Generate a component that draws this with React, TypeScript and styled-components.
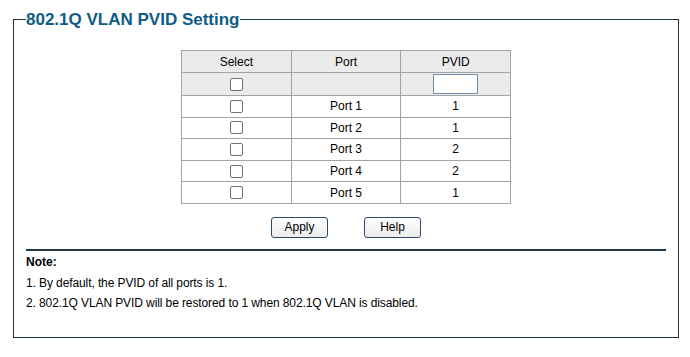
import React, { useState } from 'react';
import styled, { createGlobalStyle } from 'styled-components';

const GlobalStyle = createGlobalStyle`
  html, body {
    margin: 0;
    padding: 0;
    background: #ffffff;
  }
  body {
    font-family: 'Liberation Sans', Arial, sans-serif;
    font-size: 12px;
    color: #000000;
  }
`;

const Panel = styled.fieldset`
  box-sizing: border-box;
  width: 666px;
  height: 328px;
  margin: 10px 0 0 13px;
  padding: 0 12px 0 12px;
  border: 1px solid #1e3342;
  min-width: 0;
`;

const Title = styled.legend`
  padding: 0;
  font-size: 17px;
  font-weight: bold;
  color: #0f5c85;
  line-height: 19px;
`;

const TableWrap = styled.div`
  display: flex;
  justify-content: center;
  padding-top: 21px;
`;

const PortTable = styled.table`
  border-collapse: collapse;
  width: 330px;
  table-layout: fixed;
`;

const HeadCell = styled.th`
  height: 21px;
  padding: 0;
  background: #ebebeb;
  border: 1px solid #a3a3a3;
  font-weight: normal;
  text-align: center;
  vertical-align: middle;
`;

const Cell = styled.td<{ $shaded?: boolean }>`
  height: ${({ $shaded }) => ($shaded ? '22px' : '20.6px')};
  padding: 0;
  background: ${({ $shaded }) => ($shaded ? '#ebebeb' : '#ffffff')};
  border: 1px solid #a3a3a3;
  text-align: center;
  vertical-align: middle;
`;

const Check = styled.input.attrs({ type: 'checkbox' })`
  appearance: none;
  box-sizing: border-box;
  display: block;
  width: 13px;
  height: 13px;
  margin: 0 auto;
  border: 1px solid #707070;
  border-radius: 2px;
  background: #ffffff;
`;

const PvidInput = styled.input`
  box-sizing: border-box;
  display: block;
  width: 45px;
  height: 20px;
  margin: 0 auto;
  border: 1px solid #6e8fae;
  background: #ffffff;
  font: inherit;
`;

const Actions = styled.div`
  display: flex;
  justify-content: center;
  gap: 36px;
  padding-top: 13px;
`;

const Button = styled.button`
  box-sizing: border-box;
  width: 57px;
  height: 21px;
  padding: 0;
  border: 1px solid #2f4a68;
  border-radius: 3px;
  background: linear-gradient(#ffffff, #ececec);
  font-family: 'Liberation Sans', Arial, sans-serif;
  font-size: 12px;
  color: #000000;
`;

const Divider = styled.hr`
  margin: 11px 0 0 0;
  border: 0;
  height: 2px;
  background: #1e3a4c;
`;

const Notes = styled.div`
  padding-top: 1px;
  line-height: 20px;
  letter-spacing: -0.1px;
`;

const NoteTitle = styled.div`
  margin-bottom: 1px;
  font-weight: bold;
  letter-spacing: 0;
`;

const ports = [
  { name: 'Port 1', pvid: 1 },
  { name: 'Port 2', pvid: 1 },
  { name: 'Port 3', pvid: 2 },
  { name: 'Port 4', pvid: 2 },
  { name: 'Port 5', pvid: 1 },
];

export default function App() {
  const [pvid, setPvid] = useState('');

  return (
    <>
      <GlobalStyle />
      <Panel>
        <Title>802.1Q VLAN PVID Setting</Title>
        <TableWrap>
          <PortTable>
            <thead>
              <tr>
                <HeadCell>Select</HeadCell>
                <HeadCell>Port</HeadCell>
                <HeadCell>PVID</HeadCell>
              </tr>
            </thead>
            <tbody>
              <tr>
                <Cell $shaded>
                  <Check />
                </Cell>
                <Cell $shaded />
                <Cell $shaded>
                  <PvidInput value={pvid} onChange={(e) => setPvid(e.target.value)} />
                </Cell>
              </tr>
              {ports.map((p) => (
                <tr key={p.name}>
                  <Cell>
                    <Check />
                  </Cell>
                  <Cell>{p.name}</Cell>
                  <Cell>{p.pvid}</Cell>
                </tr>
              ))}
            </tbody>
          </PortTable>
        </TableWrap>
        <Actions>
          <Button type='button'>Apply</Button>
          <Button type='button'>Help</Button>
        </Actions>
        <Divider />
        <Notes>
          <NoteTitle>Note:</NoteTitle>
          <div>1. By default, the PVID of all ports is 1.</div>
          <div>2. 802.1Q VLAN PVID will be restored to 1 when 802.1Q VLAN is disabled.</div>
        </Notes>
      </Panel>
    </>
  );
}
